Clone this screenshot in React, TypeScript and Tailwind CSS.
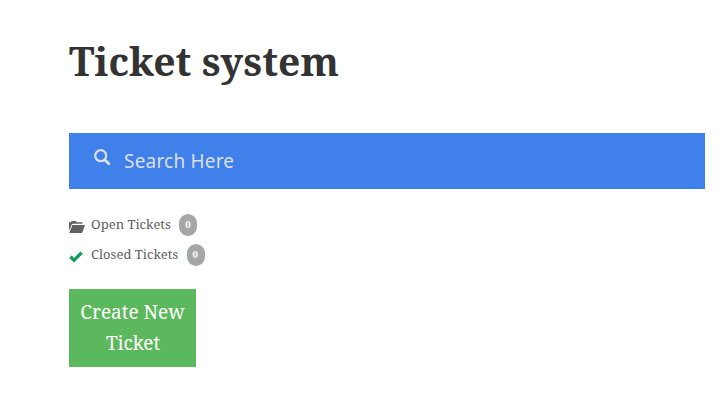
function SearchIcon() {
  return (
    <svg viewBox="0 0 17 17" className="mt-[-8px] h-[17px] w-[17px] shrink-0" fill="none" stroke="#dcdfe4">
      <circle cx="6.7" cy="6.7" r="5.5" strokeWidth="2.3" />
      <path d="M10.9 10.9L14.9 14.8" strokeWidth="2.8" strokeLinecap="round" />
    </svg>
  );
}

function FolderIcon() {
  return (
    <svg viewBox="0 0 16 14" className="mt-[4px] h-[14px] w-4" fill="#616161">
      <path d="M0 10.8V2.2h1.8L2.8 1h4l.8 1.2H13.4v1.5H3.6L2.8 4.3z" />
      <path d="M3.3 5H16l-2.9 8H.3z" />
    </svg>
  );
}

function CheckIcon() {
  return (
    <svg viewBox="0 0 16 14" className="mt-[3px] h-[14px] w-4" fill="#0f9d58">
      <path d="M.2 7.9L2.6 5.5l2.5 2.4L11.4 1.5l2.4 2.3L5.1 12.4z" />
    </svg>
  );
}

function Row({ open, label }: { open?: boolean; label: string }) {
  return (
    <li className="flex h-[30px] items-center">
      <span className="w-[22px]">{open ? <FolderIcon /> : <CheckIcon />}</span>
      <span className="-mt-0.5 text-[13px] leading-5 tracking-[0.02px] text-[#616161]">{label}</span>
      <span className="ml-[8.3px] flex h-[22px] w-[18px] items-center justify-center rounded-[9px] bg-[#a6a6a6] pt-px pr-[0.5px] text-[9.5px] font-bold text-white">
        0
      </span>
    </li>
  );
}

export default function App() {
  return (
    <main className="min-h-[406px] bg-white pt-9 pr-[23px] pl-[69px] font-['Noto_Serif',serif]">
      <h1 className="text-[39px] font-bold leading-[50px] tracking-[0.1px] text-[#333]">Ticket system</h1>
      <div className="mt-[47px] flex h-14 items-center bg-[#4080ea] pl-[25px]">
        <SearchIcon />
        <input
          type="text"
          aria-label="Search"
          placeholder="Search Here"
          className="ml-[13px] h-full flex-1 bg-transparent font-['Noto_Sans',sans-serif] text-[19px] tracking-[0.2px] outline-none placeholder:text-[#dcdfe4]"
        />
      </div>
      <ul className="mt-[21px]">
        <Row open label="Open Tickets" />
        <Row label="Closed Tickets" />
      </ul>
      <button className="mt-[19px] flex h-[78px] w-[127px] items-center justify-center bg-[#5cb85c] text-center text-[19px] leading-[31px] text-white">
        <span>
          Create New
          <br />
          <span className="pl-px tracking-[-0.1px]">Ticket</span>
        </span>
      </button>
    </main>
  );
}
